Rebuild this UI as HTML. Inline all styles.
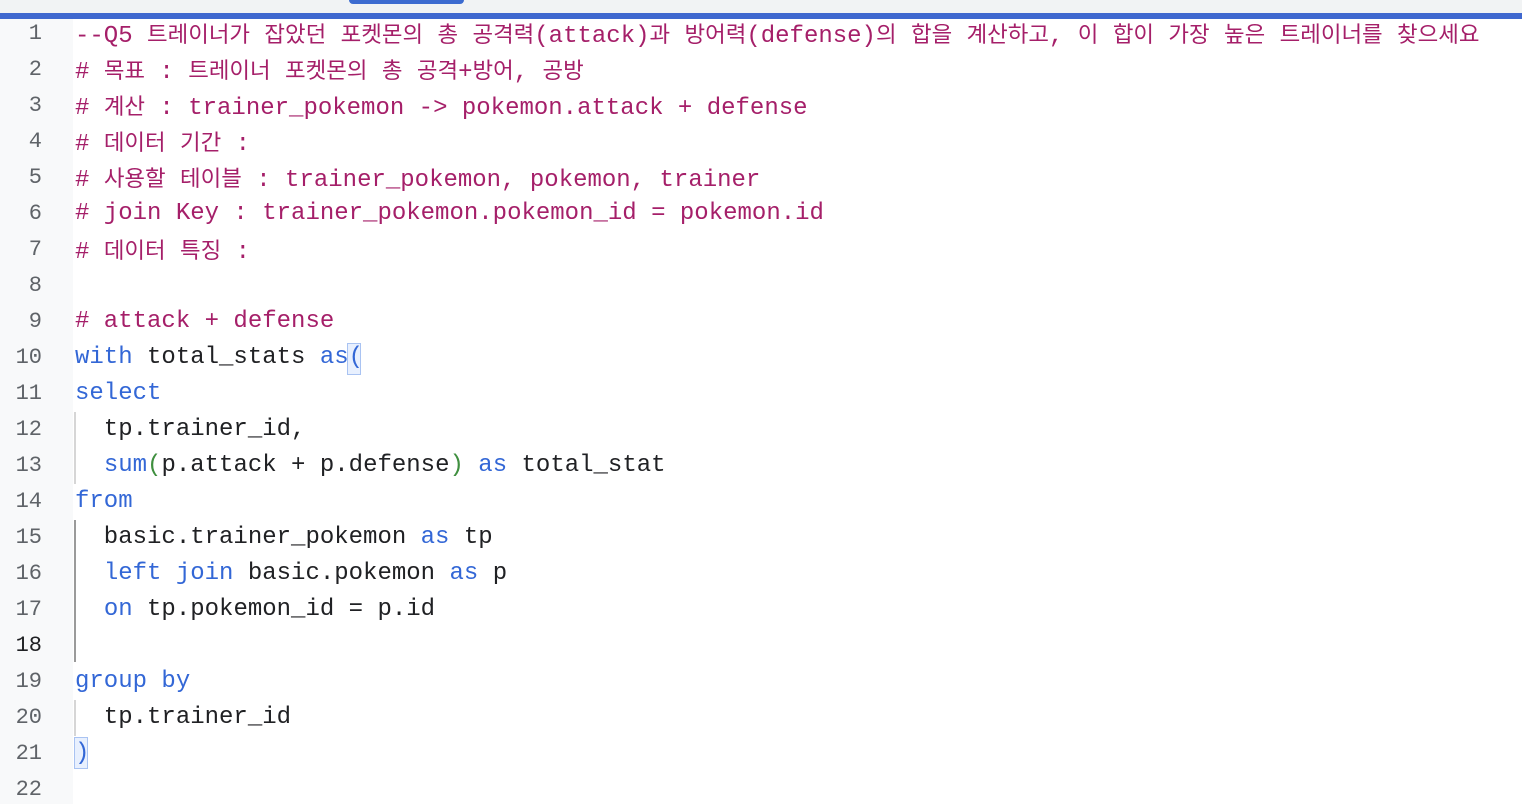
<!DOCTYPE html>
<html><head><meta charset="utf-8"><style>
body{margin:0;width:1522px;height:804px;overflow:hidden;background:#fff;position:relative;font-family:"Liberation Mono",monospace;}
.top{position:absolute;left:0;top:0;width:1522px;height:13px;background:#f1f3f4;}
.btn{position:absolute;left:349px;top:0;width:115px;height:4px;background:#3c6bd0;border-radius:0 0 4px 4px;}
.bar{position:absolute;left:0;top:13px;width:1522px;height:6px;background:#3f68cf;}
.gut{position:absolute;left:0;top:19px;width:73px;height:785px;background:#f8f9fa;}
.ln{position:absolute;left:0;width:42px;text-align:right;font-size:22px;color:#5f6368;height:36px;line-height:36px;}
.cl{position:absolute;left:75px;font-size:24px;height:36px;line-height:36px;white-space:pre;color:#202124;}
.k{font-family:"Noto Sans CJK KR",sans-serif;font-size:22.4px;line-height:1;}
.c{color:#a51f69}.b{color:#3367d6}.g{color:#3f8f3f}
.gd{position:absolute;left:74px;width:2px;background:#d6d6d6;}
.bx{position:absolute;width:12px;height:30px;border:1px solid #a9c3f2;background:#e8f0fe;}
</style></head><body>
<div class="top"></div><div class="btn"></div><div class="bar"></div><div class="gut"></div>
<div class="gd" style="top:412px;height:72px"></div>
<div class="gd" style="top:520px;height:142px;background:#9a9a9a"></div>
<div class="gd" style="top:700px;height:36px"></div>
<div class="bx" style="left:347px;top:343px"></div>
<div class="bx" style="left:74px;top:737px"></div>
<div class="ln" style="top:16px">1</div>
<div class="ln" style="top:52px">2</div>
<div class="ln" style="top:88px">3</div>
<div class="ln" style="top:124px">4</div>
<div class="ln" style="top:160px">5</div>
<div class="ln" style="top:196px">6</div>
<div class="ln" style="top:232px">7</div>
<div class="ln" style="top:268px">8</div>
<div class="ln" style="top:304px">9</div>
<div class="ln" style="top:340px">10</div>
<div class="ln" style="top:376px">11</div>
<div class="ln" style="top:412px">12</div>
<div class="ln" style="top:448px">13</div>
<div class="ln" style="top:484px">14</div>
<div class="ln" style="top:520px">15</div>
<div class="ln" style="top:556px">16</div>
<div class="ln" style="top:592px">17</div>
<div class="ln" style="top:628px;color:#202124">18</div>
<div class="ln" style="top:664px">19</div>
<div class="ln" style="top:700px">20</div>
<div class="ln" style="top:736px">21</div>
<div class="ln" style="top:772px">22</div>
<div class="cl c" style="top:19px">--Q5 <span class="k">트레이너가</span> <span class="k">잡았던</span> <span class="k">포켓몬의</span> <span class="k">총</span> <span class="k">공격력</span>(attack)<span class="k">과</span> <span class="k">방어력</span>(defense)<span class="k">의</span> <span class="k">합을</span> <span class="k">계산하고</span>, <span class="k">이</span> <span class="k">합이</span> <span class="k">가장</span> <span class="k">높은</span> <span class="k">트레이너를</span> <span class="k">찾으세요</span></div>
<div class="cl c" style="top:55px"># <span class="k">목표</span> : <span class="k">트레이너</span> <span class="k">포켓몬의</span> <span class="k">총</span> <span class="k">공격</span>+<span class="k">방어</span>, <span class="k">공방</span></div>
<div class="cl c" style="top:91px"># <span class="k">계산</span> : trainer_pokemon -&gt; pokemon.attack + defense</div>
<div class="cl c" style="top:127px"># <span class="k">데이터</span> <span class="k">기간</span> :</div>
<div class="cl c" style="top:163px"># <span class="k">사용할</span> <span class="k">테이블</span> : trainer_pokemon, pokemon, trainer</div>
<div class="cl c" style="top:196px"># join Key : trainer_pokemon.pokemon_id = pokemon.id</div>
<div class="cl c" style="top:235px"># <span class="k">데이터</span> <span class="k">특징</span> :</div>
<div class="cl c" style="top:304px"># attack + defense</div>
<div class="cl" style="top:340px"><span class="b">with</span> total_stats <span class="b">as(</span></div>
<div class="cl b" style="top:376px">select</div>
<div class="cl" style="top:412px">  tp.trainer_id,</div>
<div class="cl" style="top:448px">  <span class="b">sum</span><span class="g">(</span>p.attack + p.defense<span class="g">)</span> <span class="b">as</span> total_stat</div>
<div class="cl b" style="top:484px">from</div>
<div class="cl" style="top:520px">  basic.trainer_pokemon <span class="b">as</span> tp</div>
<div class="cl" style="top:556px">  <span class="b">left join</span> basic.pokemon <span class="b">as</span> p</div>
<div class="cl" style="top:592px">  <span class="b">on</span> tp.pokemon_id = p.id</div>
<div class="cl b" style="top:664px">group by</div>
<div class="cl" style="top:700px">  tp.trainer_id</div>
<div class="cl b" style="top:736px">)</div>
</body></html>
